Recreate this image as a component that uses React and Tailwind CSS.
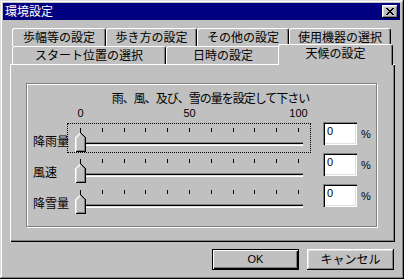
import React from 'react';

const raised = 'shadow-[inset_-1px_-1px_#000,inset_1px_1px_#fff,inset_-2px_-2px_#808080,inset_2px_2px_#dfdfdf]';
const sunken = 'shadow-[inset_1px_1px_#808080,inset_2px_2px_#000,inset_-1px_-1px_#fff,inset_-2px_-2px_#dfdfdf]';

const Tab = ({ label, w, active }) => (
  <div
    className={`${w} ${
      active ? 'relative z-10 -ml-[2px] -mt-[2px] h-[21px] pb-[2px]' : 'h-[18px] pt-[1px]'
    } flex shrink-0 items-center justify-center whitespace-nowrap rounded-t-[3px] border-t border-l border-r border-t-white border-l-white border-r-black bg-[#c0c0c0] text-[12px] leading-none shadow-[inset_-1px_0_#808080]`}
  >
    {label}
  </div>
);

const Thumb = () => (
  <svg className="absolute left-[7px] top-[8px]" width="11" height="20" viewBox="0 0 11 20" shapeRendering="crispEdges">
    <polygon points="0,5 5,0 6,0 11,5 11,20 0,20" fill="#c0c0c0" />
    <path d="M0.5 19.5V5.5L5.5 0.5" stroke="#fff" fill="none" />
    <path d="M1.5 18.5V6L5.5 2" stroke="#dfdfdf" fill="none" />
    <path d="M5.5 0.5L10.5 5.5V19.5H0.5" stroke="#000" fill="none" />
    <path d="M5.5 1.5L9.5 5.5V18.5H1.5" stroke="#808080" fill="none" />
  </svg>
);

const Slider = ({ focused }) => (
  <div
    className={`relative mt-[1px] h-[30px] w-[244px] shrink-0 border border-dotted ${
      focused ? 'border-black' : 'border-transparent'
    }`}
  >
    <div className="ml-[12px] mt-[4px] flex h-[4px] w-[219px] justify-between">
      {Array.from({ length: 11 }).map((_, i) => (
        <div key={i} className="h-[4px] w-px bg-black" />
      ))}
    </div>
    <div className="ml-[7px] mt-[10px] h-[4px] w-[228px] bg-[#dfdfdf] shadow-[inset_1px_1px_#808080,inset_2px_2px_#000,inset_-1px_-1px_#fff]" />
    <Thumb />
  </div>
);

const Row = ({ label, focused }) => (
  <div className="flex h-[31px] items-start pl-[6px]">
    <div className="mt-[13px] w-[34px] shrink-0 whitespace-nowrap text-[12px] leading-[14px]">{label}</div>
    <Slider focused={focused} />
    <div className={`ml-[12px] h-[23px] w-[34px] shrink-0 bg-white pl-[4px] pt-[4px] text-[11px] leading-none ${sunken}`}>0</div>
    <div className="ml-[4px] mt-[6px] text-[11px] leading-[13px]">%</div>
  </div>
);

const Scale = ({ n }) => (
  <div className="flex w-px justify-center whitespace-nowrap">
    <span>{n}</span>
  </div>
);

const App = () => {
  return (
    <div className="h-[279px] w-[404px] bg-[#c0c0c0] font-['Liberation_Sans','Noto_Sans_CJK_JP',sans-serif] text-black">
      <div className="flex h-full flex-col pb-[3px] pl-[3px] pr-[4px] pt-[3px] shadow-[inset_-1px_-1px_#000,inset_1px_1px_#dfdfdf,inset_-2px_-2px_#808080,inset_2px_2px_#fff]">
        {/* title bar */}
        <div className="flex h-[17px] items-center justify-between bg-[#000080] pl-[2px] pr-[2px]">
          <span className="text-[12px] leading-none text-white">環境設定</span>
          <div className={`flex h-[13px] w-[16px] items-center justify-center bg-[#c0c0c0] ${raised}`}>
            <svg width="8" height="7" viewBox="0 0 8 7" shapeRendering="crispEdges">
              <path
                d="M0 0h2v1H0zM6 0h2v1H6zM1 1h2v1H1zM5 1h2v1H5zM2 2h4v1H2zM3 3h2v1H3zM2 4h4v1H2zM1 5h2v1H1zM5 5h2v1H5zM0 6h2v1H0zM6 6h2v1H6z"
                fill="#000"
              />
            </svg>
          </div>
        </div>

        {/* tabs */}
        <div className="ml-[9px] mt-[8px] flex">
          <Tab label="歩幅等の設定" w="w-[94px]" />
          <Tab label="歩き方の設定" w="w-[91px]" />
          <Tab label="その他の設定" w="w-[92px]" />
          <Tab label="使用機器の選択" w="w-[102px]" />
        </div>
        <div className="ml-[9px] flex h-[18px] items-start">
          <Tab label="スタート位置の選択" w="w-[154px]" />
          <Tab label="日時の設定" w="w-[114px]" />
          <Tab label="天候の設定" w="w-[115px]" active />
        </div>

        {/* panel */}
        <div className="ml-[7px] h-[178px] w-[385px] pl-[16px] pt-[19px] shadow-[inset_1px_1px_#fff,inset_-1px_-1px_#000,inset_-2px_-2px_#808080]">
          <div className="flex h-[144px] w-[351px] flex-col border border-[#808080] shadow-[inset_1px_1px_#fff,1px_1px_#fff]">
            <div className="ml-[86px] mt-[8px] flex w-[195px] justify-center whitespace-nowrap text-[12px] leading-[14px] tracking-[-1px]">
              雨、風、及び、雪の量を設定して下さい
            </div>
            <div className="ml-[53px] mt-[1px] flex w-[219px] justify-between text-[11px] leading-[13px]">
              <Scale n="0" />
              <Scale n="50" />
              <Scale n="100" />
            </div>
            <div className="mt-[2px] flex flex-col">
              <Row label="降雨量" focused />
              <Row label="風速" />
              <Row label="降雪量" />
            </div>
          </div>
        </div>

        {/* buttons */}
        <div className="mt-[7px] flex justify-end gap-[8px] pr-[6px]">
          <button className="flex h-[21px] w-[87px] items-center justify-center border border-black bg-[#c0c0c0] text-[11px] leading-none shadow-[inset_1px_1px_#fff,inset_-1px_-1px_#000,inset_-2px_-2px_#808080]">
            OK
          </button>
          <button className={`flex h-[21px] w-[87px] items-center justify-center bg-[#c0c0c0] text-[12px] leading-none ${raised}`}>
            キャンセル
          </button>
        </div>
      </div>
    </div>
  );
};

export default App;
